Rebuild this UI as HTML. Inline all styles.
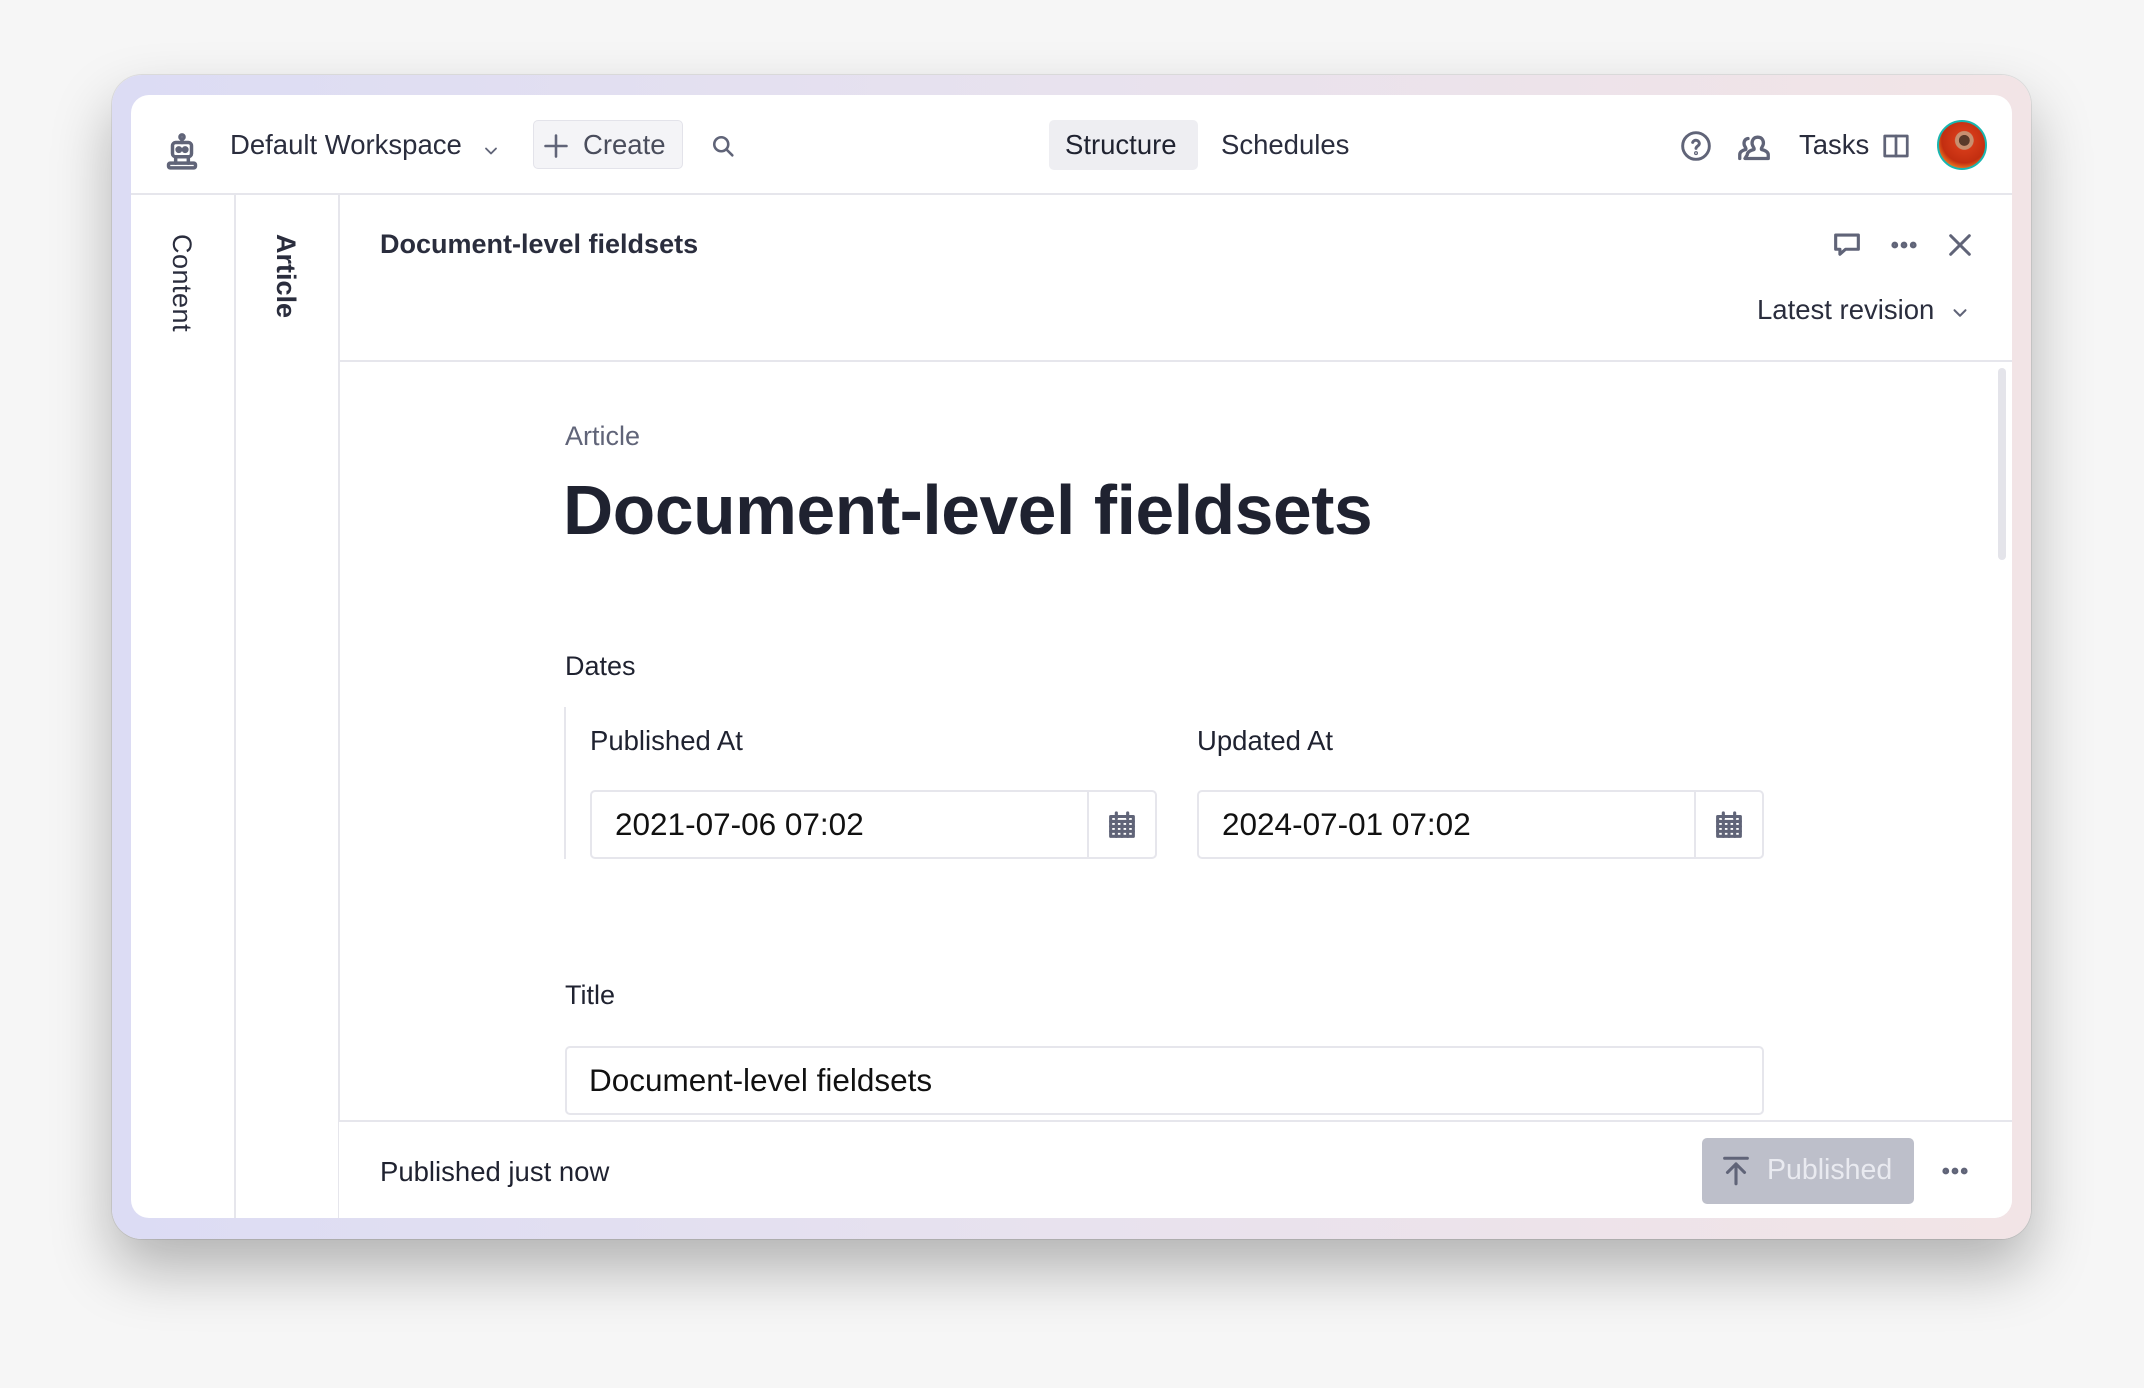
<!DOCTYPE html>
<html><head><meta charset="utf-8"><style>
*{box-sizing:border-box;margin:0;padding:0}
body{width:2144px;height:1388px;background:#f6f6f6;font-family:"Liberation Sans",sans-serif;color:#1f2230;position:relative;overflow:hidden}
.frame{position:absolute;left:112px;top:75px;width:1919px;height:1164px;border-radius:30px;background:linear-gradient(90deg,#dcdcf4,#e8e2ee 50%,#f2e4e6);box-shadow:0 30px 60px rgba(0,0,0,.28),0 0 0 1px rgba(0,0,0,.08)}
.win{position:absolute;left:131px;top:95px;width:1881px;height:1123px;background:#fff;border-radius:18px;overflow:hidden}
.abs{position:absolute}
.t{position:absolute;white-space:nowrap}
.hl{position:absolute;background:#e6e6ec}
svg{position:absolute;fill:none;stroke:#606478;stroke-width:2.2;stroke-linecap:round;stroke-linejoin:round}
</style></head><body>
<div class="frame"></div>
<div class="win">
 <!-- header -->
 <svg style="left:32px;top:38px" width="38" height="38" viewBox="0 0 24 24" stroke="#2a2d3a" stroke-width="1.6"><circle cx="12" cy="2.5" r="1.3"/><path d="M12 4v2"/><rect x="6" y="6" width="12" height="9" rx="2"/><circle cx="10" cy="10.5" r="1.1"/><circle cx="14" cy="10.5" r="1.1"/><path d="M8 15v4M16 15v4"/><rect x="3.5" y="19" width="17" height="3" rx="1"/></svg>
 <div class="t" style="left:99px;top:34px;font-size:27.5px;color:#2a2d3d">Default Workspace</div>
 <svg style="left:350px;top:46px" width="20" height="20" viewBox="0 0 24 24"><path d="M6 9l6 6 6-6"/></svg>
 <div class="abs" style="left:402px;top:25px;width:150px;height:49px;background:#f4f4f7;border:1px solid #e3e3ea;border-radius:5px"></div>
 <svg style="left:411px;top:37px" width="28" height="28" viewBox="0 0 24 24"><path d="M12 3v18M3 12h18"/></svg>
 <div class="t" style="left:452px;top:34px;font-size:27.5px;color:#4a4d5c">Create</div>
 <svg style="left:578px;top:37px" width="28" height="28" viewBox="0 0 24 24"><circle cx="10.5" cy="10.5" r="6"/><path d="M15 15l5 5"/></svg>
 <div class="abs" style="left:918px;top:25px;width:149px;height:50px;background:#eeeef2;border-radius:5px"></div>
 <div class="t" style="left:934px;top:34px;font-size:27.5px;color:#1f2230">Structure</div>
 <div class="t" style="left:1090px;top:34px;font-size:27.5px;color:#2a2d3d">Schedules</div>
 <svg style="left:1549px;top:35px" width="32" height="32" viewBox="0 0 24 24"><circle cx="12" cy="12" r="10"/><path d="M9.5 9.3a2.6 2.6 0 015 .9c0 1.7-2.5 2-2.5 3.6"/><circle cx="12" cy="17.3" r=".4" fill="#606478"/></svg>
 <svg style="left:1605px;top:32px" width="36" height="36" viewBox="0 0 24 24"><path d="M2.5 21v-2.5c0-2 2-3 4-3.5.5-1-.5-1.5-1-3-.5-2 .3-4 2.5-4.3M6 21h15.5v-2.5c0-2-2.5-3-4.5-3.5-.5-1 .8-1.8 1.2-3.5.4-2-.6-4.7-3.7-4.7s-4.1 2.7-3.7 4.7c.4 1.7 1.7 2.5 1.2 3.5-2 .5-4.5 1.5-4.5 3.5z"/></svg>
 <div class="t" style="left:1668px;top:34px;font-size:27.5px;color:#2a2d3d">Tasks</div>
 <svg style="left:1750px;top:36px" width="30" height="30" viewBox="0 0 24 24"><rect x="3" y="4" width="18" height="16"/><path d="M12 4v16"/></svg>
 <div class="abs" style="left:1806px;top:25px;width:50px;height:50px;border-radius:50%;background:radial-gradient(circle at 55% 40%,#5a3a2a 0 14%,#c89070 15% 24%,#d43a18 26%,#c22e10 60%,#e87020 75%);border:2px solid #19b6b0"></div>
 <div class="hl" style="left:0;top:98px;width:100%;height:2px"></div>
 <!-- sidebars -->
 <div class="hl" style="left:103px;top:99px;width:2px;height:1030px"></div>
 <div class="hl" style="left:207px;top:99px;width:2px;height:1030px"></div>
 <div class="t" style="left:35px;top:139px;font-size:27px;color:#2a2d3d;writing-mode:vertical-rl;letter-spacing:0.5px">Content</div>
 <div class="t" style="left:139px;top:139px;font-size:27px;font-weight:bold;color:#2a2d3d;writing-mode:vertical-rl">Article</div>
 <!-- doc header -->
 <div class="t" style="left:249px;top:134px;font-size:27px;font-weight:bold;color:#2a2d3d">Document-level fieldsets</div>
 <svg style="left:1699px;top:133px" width="34" height="34" viewBox="0 0 24 24"><path d="M4 5h16v10H11l-4 3.5V15H4z"/></svg>
 <svg style="left:1756px;top:133px" width="34" height="34" viewBox="0 0 24 24" fill="#606478" stroke="none"><circle cx="5.5" cy="12" r="1.3"/><circle cx="12" cy="12" r="1.3"/><circle cx="18.5" cy="12" r="1.3"/></svg>
 <svg style="left:1813px;top:134px" width="32" height="32" viewBox="0 0 24 24"><path d="M5 5l14 14M19 5L5 19"/></svg>
 <div class="t" style="left:1626px;top:199px;font-size:27.5px;color:#2a2d3d">Latest revision</div>
 <svg style="left:1818px;top:207px" width="22" height="22" viewBox="0 0 24 24"><path d="M6 9l6 6 6-6"/></svg>
 <div class="hl" style="left:208px;top:265px;width:100%;height:2px"></div>
 <div class="abs" style="left:1867px;top:273px;width:8px;height:192px;background:#e4e4ea;border-radius:4px"></div>
 <!-- content -->
 <div class="t" style="left:434px;top:326px;font-size:27px;color:#606478">Article</div>
 <div class="t" style="left:432px;top:375px;font-size:69.5px;font-weight:bold;color:#1f2230;letter-spacing:-0.4px">Document-level fieldsets</div>
 <div class="t" style="left:434px;top:556px;font-size:27px;color:#1f2230">Dates</div>
 <div class="hl" style="left:433px;top:612px;width:2px;height:152px"></div>
 <div class="t" style="left:459px;top:630px;font-size:27.5px;color:#1f2230">Published At</div>
 <div class="t" style="left:1066px;top:630px;font-size:27.5px;color:#1f2230">Updated At</div>
 <div class="abs" style="left:459px;top:695px;width:567px;height:69px;border:2px solid #e6e6ec;border-radius:5px"></div>
 <div class="hl" style="left:956px;top:696px;width:2px;height:67px"></div>
 <div class="t" style="left:484px;top:711px;font-size:31.5px;color:#111">2021-07-06 07:02</div>
 <div class="abs" style="left:1066px;top:695px;width:567px;height:69px;border:2px solid #e6e6ec;border-radius:5px"></div>
 <div class="hl" style="left:1563px;top:696px;width:2px;height:67px"></div>
 <div class="t" style="left:1091px;top:711px;font-size:31.5px;color:#111">2024-07-01 07:02</div>
 <svg style="left:974px;top:713px" width="34" height="34" viewBox="0 0 24 24" stroke-width="1.4"><rect x="4" y="6" width="16" height="14" fill="#fff"/><path d="M4 9.5h16M4 13h16M4 16.5h16M8 9.5v10.5M12 9.5v10.5M16 9.5v10.5M8 3.5v4M16 3.5v4"/></svg>
 <svg style="left:1581px;top:713px" width="34" height="34" viewBox="0 0 24 24" stroke-width="1.4"><rect x="4" y="6" width="16" height="14" fill="#fff"/><path d="M4 9.5h16M4 13h16M4 16.5h16M8 9.5v10.5M12 9.5v10.5M16 9.5v10.5M8 3.5v4M16 3.5v4"/></svg>
 <div class="t" style="left:434px;top:885px;font-size:27px;color:#1f2230">Title</div>
 <div class="abs" style="left:434px;top:951px;width:1199px;height:69px;border:2px solid #e6e6ec;border-radius:5px"></div>
 <div class="t" style="left:458px;top:967px;font-size:31.5px;color:#111">Document-level fieldsets</div>
 <!-- footer -->
 <div class="abs" style="left:208px;top:1025px;width:1700px;height:100px;background:#fff"></div>
 <div class="hl" style="left:208px;top:1025px;width:100%;height:2px"></div>
 <div class="t" style="left:249px;top:1061px;font-size:27.5px;color:#1f2230">Published just now</div>
 <div class="abs" style="left:1571px;top:1043px;width:212px;height:66px;background:#bdbfca;border-radius:5px"></div>
 <svg style="left:1588px;top:1059px" width="34" height="34" viewBox="0 0 24 24" stroke="#e6e7ee"><path d="M4 3h16M12 21V7M6 13l6-6 6 6"/></svg>
 <div class="t" style="left:1636px;top:1059px;font-size:28.5px;color:#e9eaf0">Published</div>
 <svg style="left:1807px;top:1059px" width="34" height="34" viewBox="0 0 24 24" fill="#606478" stroke="none"><circle cx="5.5" cy="12" r="1.3"/><circle cx="12" cy="12" r="1.3"/><circle cx="18.5" cy="12" r="1.3"/></svg>
</div>
</body></html>
